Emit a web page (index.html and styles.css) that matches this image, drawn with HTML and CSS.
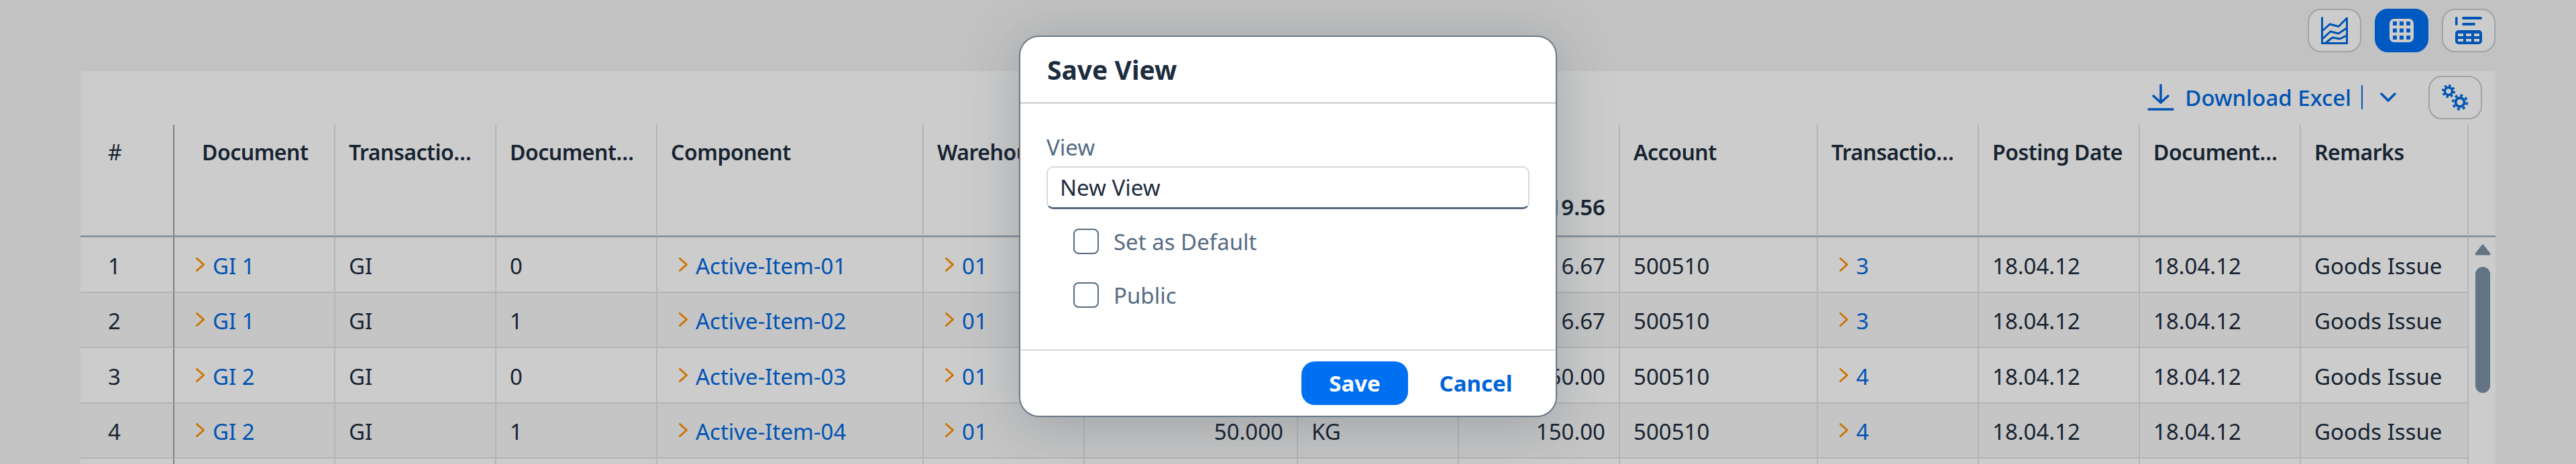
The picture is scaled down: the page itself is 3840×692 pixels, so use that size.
FILE: index.html
```html
<!DOCTYPE html>
<html lang="en">
<head>
  <meta charset="UTF-8" />
  <title>Goods Issue Report</title>
  <link rel="stylesheet" href="styles.css">
</head>
<body>

  <div class="view-bar">
    <button class="icon-btn">
      <svg class="ico" width="40" height="41" viewBox="0 0 40 41" fill="none" stroke="#0069e0" stroke-width="3" stroke-linejoin="round" stroke-linecap="round">
        <path d="M1.5 1.5V39.5H38.5V2L26 14.5L13 11L2 21" />
        <path d="M2 33L14 22L26 25L38 17" />
        <path d="M8 38L17 31L28 33L38 28" />
      </svg>
    </button>
    <button class="icon-btn active">
      <svg class="ico" width="36" height="35" viewBox="0 0 36 35">
        <rect width="36" height="35" rx="7" fill="#fff" />
        <g fill="#0070f2">
          <rect x="5" y="4" width="6" height="6" /><rect x="15" y="4" width="6" height="6" /><rect x="25" y="4" width="6" height="6" />
          <rect x="5" y="14.5" width="6" height="6" /><rect x="15" y="14.5" width="6" height="6" /><rect x="25" y="14.5" width="6" height="6" />
          <rect x="5" y="25" width="6" height="6" /><rect x="15" y="25" width="6" height="6" /><rect x="25" y="25" width="6" height="6" />
        </g>
      </svg>
    </button>
    <button class="icon-btn">
      <svg class="ico" width="40" height="41" viewBox="0 0 40 41">
        <g fill="#0069e0">
          <rect x="0" y="0" width="3.5" height="13" rx="1.7" />
          <rect x="10" y="0" width="30" height="4" rx="2" />
          <rect x="10" y="9" width="20" height="4" rx="2" />
          <rect x="0" y="20" width="40" height="21" rx="5" />
        </g>
        <g fill="#fff">
          <rect x="4" y="25" width="8" height="4" /><rect x="16" y="25" width="8" height="4" /><rect x="28" y="25" width="8" height="4" />
          <rect x="4" y="33" width="8" height="4" /><rect x="16" y="33" width="8" height="4" /><rect x="28" y="33" width="8" height="4" />
        </g>
      </svg>
    </button>
  </div>

  <div class="panel">
    <div class="panel-toolbar">
      <div class="download">
        <svg class="ico" width="40" height="40" viewBox="0 0 40 40" fill="none" stroke="#0069e0" stroke-width="3.5" stroke-linecap="round" stroke-linejoin="round">
          <path d="M20 2V28" />
          <path d="M9 18L20 28L31 18" />
          <path d="M2 38H38" />
        </svg>
        <span class="download-label">Download Excel</span>
        <span class="download-sep"></span>
        <svg class="ico" width="24" height="14" viewBox="0 0 24 14" fill="none" stroke="#0069e0" stroke-width="3.5" stroke-linecap="round" stroke-linejoin="round">
          <path d="M2 2L12 12L22 2" />
        </svg>
      </div>
      <button class="icon-btn">
        <svg class="ico" width="40" height="39" viewBox="0 0 40 39" fill="none" stroke="#0069e0">
          <circle cx="10" cy="10" r="5.5" stroke-width="3.5" />
          <circle cx="10" cy="10" r="8.4" stroke-width="3.2" stroke-dasharray="3.4 3.2" />
          <circle cx="27" cy="26.5" r="6.5" stroke-width="3.8" />
          <circle cx="27" cy="26.5" r="10.4" stroke-width="3.4" stroke-dasharray="4 4.17" />
        </svg>
      </button>
    </div>

    <table class="grid">
      <colgroup>
        <col class="c140"><col class="c240"><col class="c240"><col class="c240"><col class="c397">
        <col class="c240"><col class="c318"><col class="c240"><col class="c240"><col class="c295">
        <col class="c240"><col class="c240"><col class="c240"><col class="c250"><col class="c40">
      </colgroup>
      <thead>
        <tr>
          <th class="num-col">#</th>
          <th class="wide-pad">Document</th>
          <th>Transactio…</th>
          <th>Document…</th>
          <th>Component</th>
          <th>Warehouse</th>
          <th></th>
          <th></th>
          <th><span class="sum">119.56</span></th>
          <th>Account</th>
          <th>Transactio…</th>
          <th>Posting Date</th>
          <th>Document…</th>
          <th>Remarks</th>
          <th class="scroll-col"></th>
        </tr>
      </thead>
      <tbody>
        <tr>
          <td class="num-col">1</td>
          <td class="link-cell"><svg class="chev" width="13" height="21" viewBox="0 0 13 21"><path d="M1.5 1.5L11.5 10.5L1.5 19.5" /></svg><a>GI 1</a></td>
          <td>GI</td>
          <td>0</td>
          <td class="link-cell"><svg class="chev" width="13" height="21" viewBox="0 0 13 21"><path d="M1.5 1.5L11.5 10.5L1.5 19.5" /></svg><a>Active-Item-01</a></td>
          <td class="link-cell"><svg class="chev" width="13" height="21" viewBox="0 0 13 21"><path d="M1.5 1.5L11.5 10.5L1.5 19.5" /></svg><a>01</a></td>
          <td></td>
          <td></td>
          <td class="right">116.67</td>
          <td>500510</td>
          <td class="link-cell"><svg class="chev" width="13" height="21" viewBox="0 0 13 21"><path d="M1.5 1.5L11.5 10.5L1.5 19.5" /></svg><a>3</a></td>
          <td>18.04.12</td>
          <td>18.04.12</td>
          <td>Goods Issue</td>
          <td class="scroll-col"></td>
        </tr>
        <tr>
          <td class="num-col">2</td>
          <td class="link-cell"><svg class="chev" width="13" height="21" viewBox="0 0 13 21"><path d="M1.5 1.5L11.5 10.5L1.5 19.5" /></svg><a>GI 1</a></td>
          <td>GI</td>
          <td>1</td>
          <td class="link-cell"><svg class="chev" width="13" height="21" viewBox="0 0 13 21"><path d="M1.5 1.5L11.5 10.5L1.5 19.5" /></svg><a>Active-Item-02</a></td>
          <td class="link-cell"><svg class="chev" width="13" height="21" viewBox="0 0 13 21"><path d="M1.5 1.5L11.5 10.5L1.5 19.5" /></svg><a>01</a></td>
          <td></td>
          <td></td>
          <td class="right">116.67</td>
          <td>500510</td>
          <td class="link-cell"><svg class="chev" width="13" height="21" viewBox="0 0 13 21"><path d="M1.5 1.5L11.5 10.5L1.5 19.5" /></svg><a>3</a></td>
          <td>18.04.12</td>
          <td>18.04.12</td>
          <td>Goods Issue</td>
          <td class="scroll-col"></td>
        </tr>
        <tr>
          <td class="num-col">3</td>
          <td class="link-cell"><svg class="chev" width="13" height="21" viewBox="0 0 13 21"><path d="M1.5 1.5L11.5 10.5L1.5 19.5" /></svg><a>GI 2</a></td>
          <td>GI</td>
          <td>0</td>
          <td class="link-cell"><svg class="chev" width="13" height="21" viewBox="0 0 13 21"><path d="M1.5 1.5L11.5 10.5L1.5 19.5" /></svg><a>Active-Item-03</a></td>
          <td class="link-cell"><svg class="chev" width="13" height="21" viewBox="0 0 13 21"><path d="M1.5 1.5L11.5 10.5L1.5 19.5" /></svg><a>01</a></td>
          <td></td>
          <td></td>
          <td class="right">150.00</td>
          <td>500510</td>
          <td class="link-cell"><svg class="chev" width="13" height="21" viewBox="0 0 13 21"><path d="M1.5 1.5L11.5 10.5L1.5 19.5" /></svg><a>4</a></td>
          <td>18.04.12</td>
          <td>18.04.12</td>
          <td>Goods Issue</td>
          <td class="scroll-col"></td>
        </tr>
        <tr>
          <td class="num-col">4</td>
          <td class="link-cell"><svg class="chev" width="13" height="21" viewBox="0 0 13 21"><path d="M1.5 1.5L11.5 10.5L1.5 19.5" /></svg><a>GI 2</a></td>
          <td>GI</td>
          <td>1</td>
          <td class="link-cell"><svg class="chev" width="13" height="21" viewBox="0 0 13 21"><path d="M1.5 1.5L11.5 10.5L1.5 19.5" /></svg><a>Active-Item-04</a></td>
          <td class="link-cell"><svg class="chev" width="13" height="21" viewBox="0 0 13 21"><path d="M1.5 1.5L11.5 10.5L1.5 19.5" /></svg><a>01</a></td>
          <td class="right">50.000</td>
          <td>KG</td>
          <td class="right">150.00</td>
          <td>500510</td>
          <td class="link-cell"><svg class="chev" width="13" height="21" viewBox="0 0 13 21"><path d="M1.5 1.5L11.5 10.5L1.5 19.5" /></svg><a>4</a></td>
          <td>18.04.12</td>
          <td>18.04.12</td>
          <td>Goods Issue</td>
          <td class="scroll-col"></td>
        </tr>
        <tr>
          <td class="num-col"></td><td></td><td></td><td></td><td></td><td></td><td></td><td></td>
          <td></td><td></td><td></td><td></td><td></td><td></td><td class="scroll-col"></td>
        </tr>
      </tbody>
    </table>

    <!-- scrollbar du tableau -->
    <div class="scrollbar">
      <svg class="ico" width="24" height="17" viewBox="0 0 24 17">
        <path d="M12 2L22 15H2Z" fill="#7c91a7" stroke="#7c91a7" stroke-width="3" stroke-linejoin="round" />
      </svg>
      <span class="scroll-thumb"></span>
    </div>
  </div>

  <div class="overlay"></div>

  <div class="dialog">
    <div class="dialog-head">Save View</div>
    <div class="dialog-body">
      <label class="field-label">View</label>
      <input class="field-input" type="text" value="New View" />
      <div class="option"><span class="check"></span>Set as Default</div>
      <div class="option"><span class="check"></span>Public</div>
    </div>
    <div class="dialog-foot">
      <button class="btn-save">Save</button>
      <button class="btn-cancel">Cancel</button>
    </div>
  </div>

</body>
</html>
```

FILE: styles.css
```css
html, body {
  height: 692px;
  overflow: hidden;
}

body {
  margin: 0;
  position: relative;
  background-color: #f3f3f3;
  color: #1d2d3e;
  font-family: "Noto Sans", Arial, sans-serif;
  font-size: 33px;
}

button {
  font-family: inherit;
  cursor: pointer;
}

.ico {
  display: block;
}

/* Boutons icones */
.icon-btn {
  width: 80px;
  height: 65px;
  padding: 0;
  display: flex;
  align-items: center;
  justify-content: center;
  background-color: #fff;
  border: 2px solid #c5ccd3;
  border-radius: 20px;
}

.icon-btn.active {
  background-color: #0070f2;
  border-color: #0070f2;
}

.view-bar {
  height: 106px;
  box-sizing: border-box;
  padding: 13px 120px 0;
  display: flex;
  justify-content: flex-end;
  gap: 20px;
}

/* Panneau du tableau */
.panel {
  margin: 0 120px;
  position: relative;
  background-color: #fff;
}

.panel-toolbar {
  height: 80px;
  box-sizing: border-box;
  padding: 7px 20px 9px;
  display: flex;
  align-items: center;
  justify-content: flex-end;
  gap: 48px;
}

.download {
  display: flex;
  align-items: center;
  color: #0069e0;
  font-weight: 500;
}

.download-label {
  margin-left: 16px;
}

.download-sep {
  width: 2px;
  height: 36px;
  margin: 0 26px 0 15px;
  background-color: #0069e0;
}

/* Tableau */
.grid {
  width: 3600px;
  table-layout: fixed;
  border-collapse: separate;
  border-spacing: 0;
}

.c40 { width: 40px; }
.c140 { width: 140px; }
.c240 { width: 240px; }
.c250 { width: 250px; }
.c295 { width: 295px; }
.c318 { width: 318px; }
.c397 { width: 397px; }

th, td {
  box-sizing: border-box;
  padding: 0 20px;
  text-align: left;
  white-space: nowrap;
  border-right: 2px solid #e1e1e1;
}

th {
  height: 168px;
  padding-top: 17px;
  vertical-align: top;
  line-height: 48px;
  font-size: 32px;
  letter-spacing: -0.5px;
  font-weight: 600;
  border-bottom: 3px solid #acb9c5;
}

td {
  height: 82.5px;
  padding-top: 4px;
  border-bottom: 2px solid #e1e1e1;
}

tbody tr:nth-child(even) td {
  background-color: #f7f7f7;
}

.num-col {
  padding-left: 41px;
  border-right-color: #9f9f9f;
}

th.num-col {
  font-weight: 400;
}

.wide-pad {
  padding-left: 41px;
}

.right {
  text-align: right;
}

.sum {
  display: block;
  margin-top: 82px;
  text-align: right;
  font-size: 33px;
  letter-spacing: 0;
}

.link-cell {
  padding-left: 32px;
}

.link-cell a {
  color: #0069e0;
}

.chev {
  margin-right: 12px;
  vertical-align: 4px;
  fill: none;
  stroke: #ff9200;
  stroke-width: 3px;
  stroke-linecap: round;
  stroke-linejoin: round;
}

th.scroll-col {
  padding: 0;
  border-right: none;
}

tbody tr td.scroll-col {
  padding: 0;
  background-color: #fff;
  border-right: none;
  border-bottom: none;
}

.scrollbar {
  position: absolute;
  top: 258px;
  right: 8px;
  width: 22px;
  display: flex;
  flex-direction: column;
  align-items: center;
}

.scroll-thumb {
  flex: none;
  width: 22px;
  height: 188px;
  margin-top: 17px;
  border-radius: 11px;
  background-color: #7c91a7;
}

/* Voile et dialogue */
.overlay {
  position: absolute;
  inset: 0;
  background-color: rgba(0, 0, 0, 0.2);
}

.dialog {
  position: absolute;
  top: 53px;
  left: 1519px;
  width: 802px;
  box-sizing: border-box;
  background-color: #fff;
  border: 2px solid #6a7886;
  border-radius: 30px;
  box-shadow: 0 10px 80px rgba(34, 54, 73, 0.25);
}

.dialog-head {
  height: 100px;
  box-sizing: border-box;
  padding: 24px 40px 0;
  font-size: 39px;
  font-weight: 700;
  line-height: 50px;
  color: #1d2d3e;
  border-bottom: 3px solid #d9d9d9;
}

.dialog-body {
  padding: 41px 39px 41px;
}

.field-label {
  display: block;
  height: 48px;
  line-height: 48px;
  margin-bottom: 4px;
  color: #556b82;
}

.field-input {
  display: block;
  width: 100%;
  height: 64px;
  box-sizing: border-box;
  padding: 0 18px;
  font-family: inherit;
  font-size: 33px;
  color: #1d2d3e;
  background-color: #fff;
  border: 2px solid #d5dadd;
  border-bottom: 3px solid #556b82;
  border-radius: 10px;
  outline: none;
}

.option {
  height: 80px;
  margin-left: 40px;
  display: flex;
  align-items: center;
  gap: 22px;
  color: #556b82;
}

.field-input + .option {
  margin-top: 8px;
}

.check {
  width: 38px;
  height: 38px;
  box-sizing: border-box;
  border: 2px solid #556b82;
  border-radius: 8px;
}

.dialog-foot {
  height: 99px;
  box-sizing: border-box;
  display: flex;
  align-items: center;
  justify-content: flex-end;
  gap: 21px;
  padding-right: 39px;
  border-top: 2px solid #d9d9d9;
}

.btn-save,
.btn-cancel {
  height: 65px;
  padding: 0;
  border: none;
  border-radius: 20px;
  font-size: 33px;
  font-weight: 700;
}

.btn-save {
  width: 159px;
  color: #fff;
  background-color: #0070f2;
}

.btn-cancel {
  width: 160px;
  color: #0064d9;
  background-color: transparent;
}
```
